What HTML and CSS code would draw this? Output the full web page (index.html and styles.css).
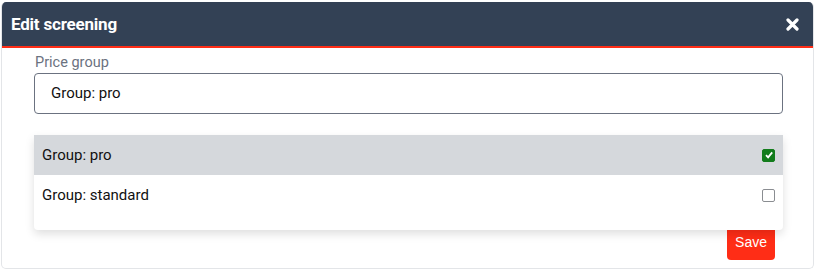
FILE: index.html
```html
<!DOCTYPE html>
<html lang="en">
  <head>
    <meta charset="UTF-8" />
    <meta name="viewport" content="width=device-width, initial-scale=1.0" />
    <title>Edit screening</title>
    <link rel="stylesheet" href="styles.css">
  </head>
  <body>
    <div class="modal">
      <div class="modal-header">
        <h2>Edit screening</h2>
        <button class="close" aria-label="Close">
          <svg width="13" height="13" viewBox="0 0 13 13">
            <path d="M2 2L11 11M11 2L2 11" stroke="#fff" stroke-width="3.2" stroke-linecap="round" />
          </svg>
        </button>
      </div>
      <div class="modal-body">
        <label class="label">Price group</label>
        <div class="select-wrap">
          <div class="select">Group: pro</div>
          <ul class="options">
            <li class="option selected">
              <span>Group: pro</span>
              <input type="checkbox" checked />
            </li>
            <li class="option">
              <span>Group: standard</span>
              <input type="checkbox" />
            </li>
          </ul>
        </div>
        <div class="actions">
          <button class="save">Save</button>
        </div>
      </div>
    </div>
  </body>
</html>
```

FILE: styles.css
```css
body {
  margin: 0;
  background-color: #fff;
  font-family: Roboto, "Liberation Sans", sans-serif;
}

.modal {
  margin: 2px 1px 0 1px;
  height: 267px;
  border: 1px solid #e3e5e8;
  border-top: none;
  border-radius: 5px;
  box-sizing: border-box;
  overflow: hidden;
}

.modal-header {
  display: flex;
  align-items: center;
  justify-content: space-between;
  height: 44px;
  padding: 0 14px 0 9px;
  background-color: #334155;
  border-bottom: 2px solid #ff2d16;
}

.modal-header h2 {
  margin: 0;
  color: #fff;
  font-size: 17px;
  font-weight: 700;
  letter-spacing: -0.2px;
}

.close {
  display: flex;
  padding: 0;
  background: none;
  border: none;
  cursor: pointer;
}

.modal-body {
  padding: 6px 30px 0 32px;
}

.label {
  display: block;
  color: #6b7280;
  font-size: 14.5px;
  line-height: 17px;
  margin-left: 1px;
}

.select-wrap {
  position: relative;
  margin-top: 2px;
}

.select {
  height: 41px;
  box-sizing: border-box;
  padding: 0 16px;
  border: 1px solid #6b7280;
  border-radius: 4px;
  font-size: 15px;
  line-height: 39px;
  color: #111;
}

.options {
  position: absolute;
  top: 62px;
  left: 0;
  right: 0;
  margin: 0;
  padding: 0 0 15px 0;
  list-style: none;
  background-color: #fff;
  border-radius: 0 0 4px 4px;
  box-shadow: 0 4px 10px rgba(0, 0, 0, 0.13);
  z-index: 2;
}

.option {
  display: flex;
  align-items: center;
  justify-content: space-between;
  height: 40px;
  padding: 0 8px;
  font-size: 15px;
  color: #111;
}

.option.selected {
  background-color: #d5d8dc;
}

.option input {
  appearance: none;
  margin: 0;
  width: 13px;
  height: 13px;
  border: 1.5px solid #8a8d91;
  border-radius: 2px;
  background-color: #fff;
  box-sizing: border-box;
}

.option input:checked {
  border-color: #127c1c;
  background-color: #127c1c;
  background-image: url("data:image/svg+xml,%3Csvg xmlns='http://www.w3.org/2000/svg' viewBox='0 0 10 10'%3E%3Cpath d='M2 5.2L4.1 7.4L8.2 2.4' fill='none' stroke='white' stroke-width='1.8'/%3E%3C/svg%3E");
  background-size: 10px 10px;
  background-position: center;
  background-repeat: no-repeat;
}

.actions {
  display: flex;
  justify-content: flex-end;
  margin-top: 110px;
  padding-right: 8px;
}

.save {
  height: 36px;
  padding: 0 8px;
  background-color: #ff2d16;
  color: #fff;
  border: none;
  border-radius: 4px;
  font-family: "Liberation Sans", Arial, sans-serif;
  font-size: 14px;
  cursor: pointer;
}
```
